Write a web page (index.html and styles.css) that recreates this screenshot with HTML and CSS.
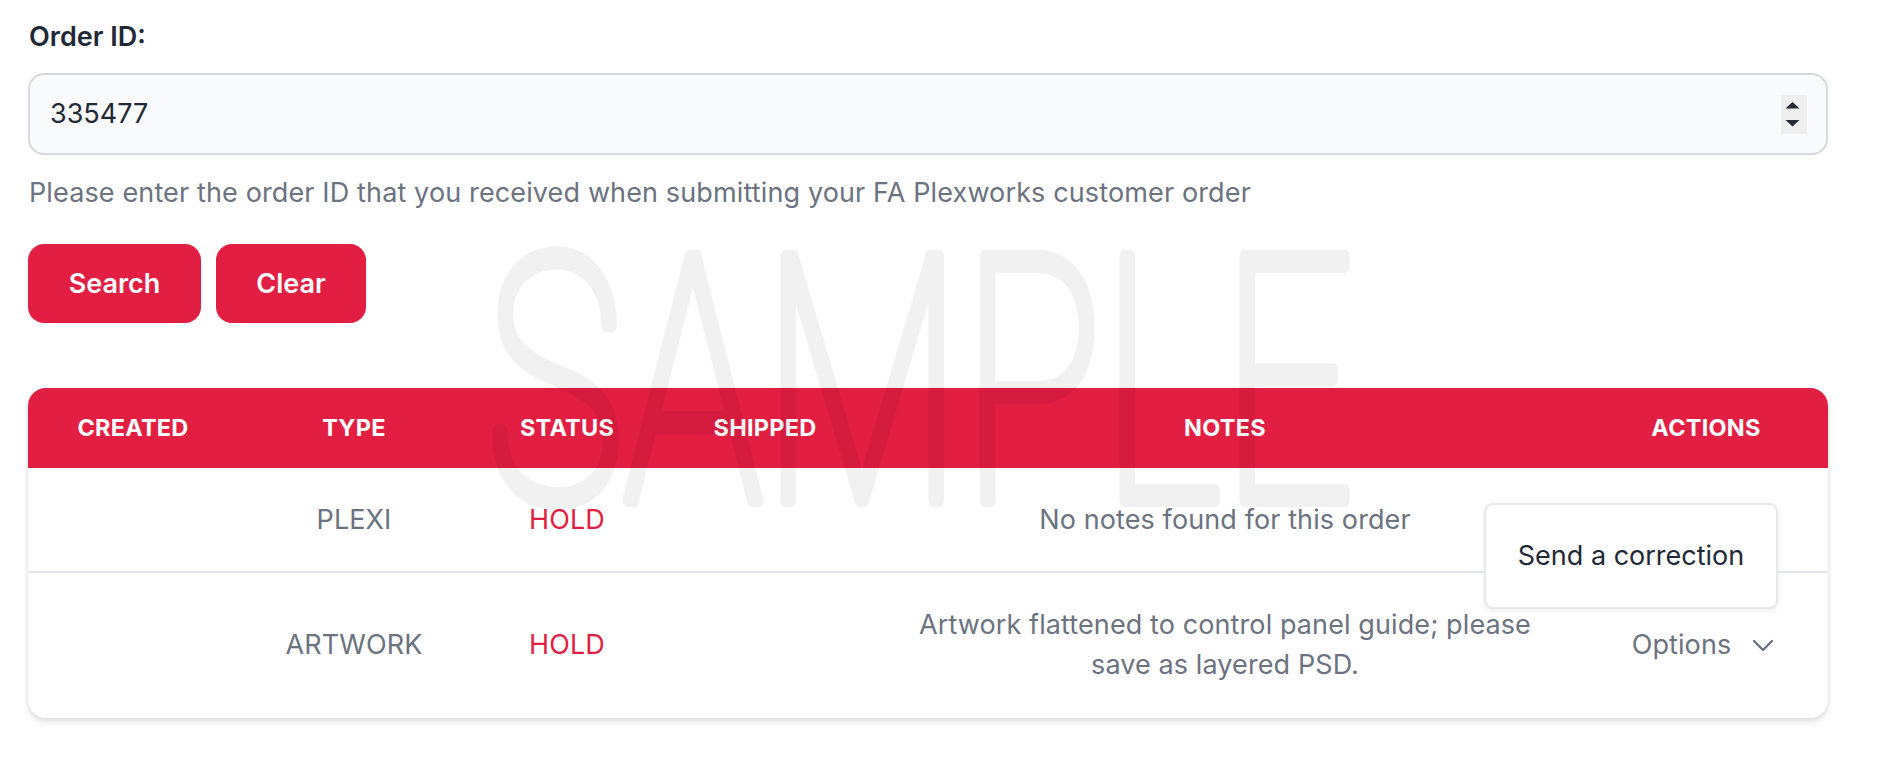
FILE: index.html
```html
<!DOCTYPE html>
<html lang="en">
<head>
<meta charset="utf-8">
<title>Order lookup</title>
<link rel="stylesheet" href="styles.css">
</head>
<body>
<div class="page">
  <form class="lookup">
    <label class="field-label" for="order-id">Order ID:</label>
    <div class="input-box">
      <span class="input-value" id="order-id">335477</span>
      <span class="spinner">
        <svg width="26" height="39" viewBox="0 0 26 39">
          <rect x="0" y="0" width="26" height="39" fill="#efeff0"/>
          <polygon points="4.5,13.5 11.5,7 18.5,13.5" fill="#252b38"/>
          <polygon points="4.5,25 11.5,31.5 18.5,25" fill="#252b38"/>
        </svg>
      </span>
    </div>
    <p class="help">Please enter the order ID that you received when submitting your FA Plexworks customer order</p>
    <div class="buttons">
      <button type="button" class="btn btn-search">Search</button>
      <button type="button" class="btn btn-clear">Clear</button>
    </div>
  </form>

  <div class="results">
    <div class="table">
      <div class="row head">
        <div class="cell">Created</div>
        <div class="cell">Type</div>
        <div class="cell">Status</div>
        <div class="cell">Shipped</div>
        <div class="cell">Notes</div>
        <div class="cell">Actions</div>
      </div>
      <div class="row body-row first">
        <div class="cell"></div>
        <div class="cell">PLEXI</div>
        <div class="cell status">HOLD</div>
        <div class="cell"></div>
        <div class="cell">No notes found for this order</div>
        <div class="cell"></div>
      </div>
      <div class="row body-row">
        <div class="cell"></div>
        <div class="cell">ARTWORK</div>
        <div class="cell status">HOLD</div>
        <div class="cell"></div>
        <div class="cell notes-wrap">Artwork flattened to control panel guide; please save as layered PSD.</div>
        <div class="cell">
          <span class="options">Options
            <svg class="chev" width="22" height="13" viewBox="0 0 22 13"><polyline points="2,2 11,11 20,2" fill="none" stroke="#6b7280" stroke-width="2.4" stroke-linecap="round" stroke-linejoin="round"/></svg>
          </span>
        </div>
      </div>
    </div>
    <div class="menu">
      <div class="menu-item">Send a correction</div>
    </div>
  </div>

  <svg class="watermark" width="1878" height="762" viewBox="0 0 1878 762" aria-hidden="true">
    <g opacity="0.05">
      <text x="486" y="500" textLength="868" lengthAdjust="spacingAndGlyphs">SAMPLE</text>
    </g>
  </svg>
</div>
</body>
</html>
```

FILE: styles.css
```css
* { box-sizing: border-box; }

html, body {
  margin: 0;
  padding: 0;
  background: #ffffff;
}

body {
  font-family: Inter, "Noto Sans", "Liberation Sans", sans-serif;
  font-size: 27px;
  line-height: 40px;
  color: #1f2937;
}

.page {
  position: relative;
  width: 1878px;
  height: 762px;
  overflow: hidden;
  padding: 17px 50px 0 28px;
}

.lookup {
  display: flex;
  flex-direction: column;
  margin: 0;
}

.field-label {
  display: block;
  font-weight: 600;
  color: #1f2937;
  height: 40px;
  padding-left: 1px;
}

.input-box {
  margin-top: 16px;
  height: 82px;
  display: flex;
  align-items: center;
  justify-content: space-between;
  background: #f9fafb;
  border: 2px solid #d5d8dd;
  border-radius: 16px;
  padding: 0 19px 0 20px;
}

.input-value {
  color: #1f2937;
}

.spinner {
  display: flex;
  width: 26px;
  height: 39px;
}

.help {
  margin: 18px 0 0;
  padding-left: 1px;
  color: #6b7280;
  letter-spacing: 0.13px;
}

.buttons {
  display: flex;
  gap: 15px;
  margin-top: 31px;
}

.btn {
  font-family: inherit;
  font-size: 27px;
  font-weight: 600;
  line-height: 40px;
  color: #ffffff;
  background: #e21e43;
  border: none;
  border-radius: 16px;
  height: 79px;
  padding: 0 40px;
}

.btn-search { width: 173px; }
.btn-clear { width: 150px; }

.results {
  position: relative;
  margin-top: 65px;
  width: 1800px;
}

.table {
  border-radius: 18px;
  overflow: hidden;
  background: #ffffff;
  box-shadow: 0 4px 7px rgba(0, 0, 0, 0.10), 0 1px 4px rgba(0, 0, 0, 0.07);
}

.row {
  display: grid;
  grid-template-columns: 210px 232px 194px 202px 718px 244px;
  align-items: center;
}

.head {
  background: #e21e43;
  color: #ffffff;
  height: 80px;
  font-size: 23.5px;
  font-weight: 700;
  text-transform: uppercase;
  letter-spacing: 0.01em;
}

.cell {
  text-align: center;
  padding: 0 36px;
}

.head .cell {
  padding: 0 10px;
}

.body-row {
  color: #6b7280;
  padding: 32px 0 33px;
  letter-spacing: 0.1px;
}

.body-row.first {
  border-bottom: 2px solid #e5e7eb;
  padding: 32px 0 31px;
}

.status {
  color: #e21e43;
}

.options {
  display: inline-flex;
  align-items: center;
  gap: 21px;
  color: #6b7280;
  margin-left: -6px;
}

.chev {
  display: block;
}

.menu {
  position: absolute;
  right: 50px;
  top: 115px;
  width: 294px;
  height: 106px;
  background: #ffffff;
  border: 2px solid #e7e8ec;
  border-radius: 9px;
  box-shadow: 0 2px 5px rgba(0, 0, 0, 0.08);
  display: flex;
  align-items: center;
  justify-content: center;
}

.menu-item {
  color: #1f2937;
  white-space: nowrap;
}

.watermark {
  position: absolute;
  left: 0;
  top: 0;
  pointer-events: none;
}

.watermark text {
  font-family: Roboto, "Liberation Sans", sans-serif;
  font-weight: 100;
  font-size: 342px;
  fill: #000000;
  stroke: #000000;
  stroke-width: 14px;
  stroke-linejoin: round;
}
```
